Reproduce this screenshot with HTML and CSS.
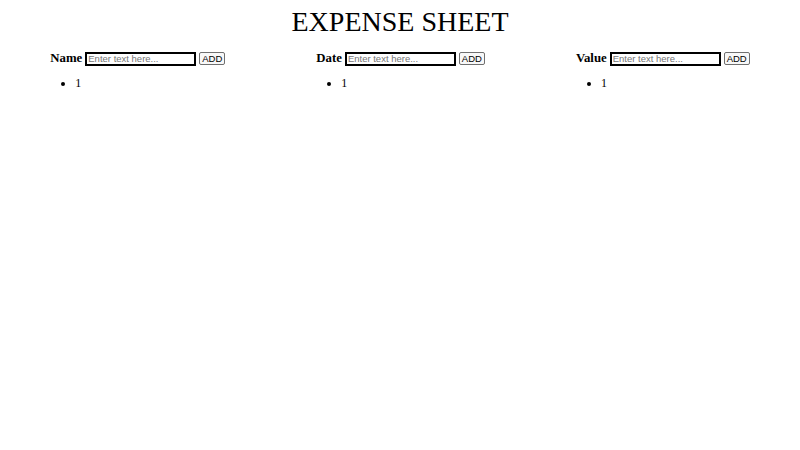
FILE: index.html
```html
<!DOCTYPE html>
<html>
<head>
<meta charset="utf-8">
<link rel="stylesheet" href="styles.css">
</head>
<body>
<h1 class="title">EXPENSE SHEET</h1>
<div class="columns">
  <div class="column">
    <div class="entry">
      <span class="label">Name</span>
      <input class="field" type="text" placeholder="Enter text here...">
      <button class="add">ADD</button>
    </div>
    <ul class="items"><li>1</li></ul>
  </div>
  <div class="column">
    <div class="entry">
      <span class="label">Date</span>
      <input class="field" type="text" placeholder="Enter text here...">
      <button class="add">ADD</button>
    </div>
    <ul class="items"><li>1</li></ul>
  </div>
  <div class="column">
    <div class="entry">
      <span class="label">Value</span>
      <input class="field" type="text" placeholder="Enter text here...">
      <button class="add">ADD</button>
    </div>
    <ul class="items"><li>1</li></ul>
  </div>
</div>
</body>
</html>
```
FILE: styles.css
```css
body {
  margin: 0;
  font-family: "Liberation Serif", "Times New Roman", serif;
  color: #000;
  background: #fff;
}
.title {
  margin: 6px 0 0 0;
  text-align: center;
  font-size: 28px;
  font-weight: normal;
  line-height: 32px;
}
.columns {
  display: flex;
  justify-content: center;
  gap: 91px;
  margin-top: 13px;
}
.column {
  display: flex;
  flex-direction: column;
}
.entry {
  display: flex;
  align-items: center;
  gap: 3px;
}
.label {
  font-weight: bold;
  font-size: 12.8px;
}
.field {
  box-sizing: border-box;
  width: 111px;
  height: 14px;
  border: 2px solid #000;
  padding: 0 1px;
  margin: 0;
  font-family: "Liberation Sans", Arial, sans-serif;
  font-size: 9.5px;
  outline: none;
}
.field::placeholder {
  color: #757575;
}
.add {
  box-sizing: border-box;
  width: 26px;
  height: 13px;
  padding: 0;
  margin: 0;
  font-family: "Liberation Sans", Arial, sans-serif;
  font-size: 9.5px;
  line-height: 9px;
  background: #f8f8f8;
  border: 1px solid #6f6f6f;
  border-radius: 2px;
  color: #000;
}
.items {
  margin: 10px 0 0 0;
  padding-left: 25px;
  font-size: 12px;
  line-height: 14px;
}
```
